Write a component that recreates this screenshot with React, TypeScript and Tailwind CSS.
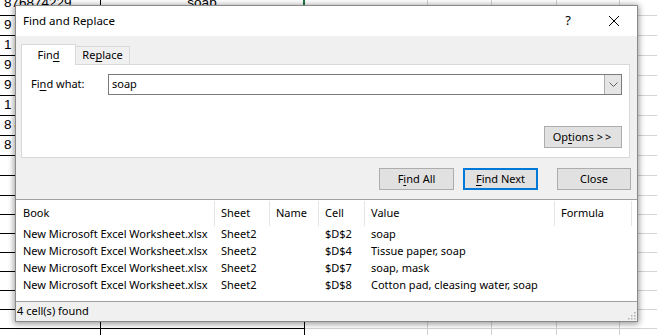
import React from 'react';

// Excel grid behind the dialog
const colWidths = ['w-[101px]', 'w-[204px]', 'w-[123px]', 'w-[64px]', 'w-[65px]', 'w-[63px]', 'w-[60px]'];
const leftNumbers = ['876874229', '934521876', '187654320', '912345678', '965432187', '123987456', '845612390', '876543210'];

const rowHeights = [
  'h-[16px]',
  ...Array(9).fill('h-[20px]'),
  ...Array(8).fill('h-[19px]'),
];

function Sheet() {
  return (
    <div className="flex flex-col font-['Liberation_Sans',sans-serif] text-[13.5px] text-black">
      {rowHeights.map((h, r) => (
        <div key={r} className={`flex ${h}`}>
          {colWidths.map((w, c) => {
            const dark = c < 2;
            return (
              <div
                key={c}
                className={`${w} shrink-0 overflow-hidden whitespace-nowrap border-b ${
                  dark ? 'border-r border-black' : 'border-r border-[#d4d4d4]'
                } ${r === 0 && c === 1 ? 'border-r-2 border-r-[#217346]' : ''} flex items-end`}
              >
                {c === 0 && leftNumbers[r] && (
                  <span className={`pl-[4px] leading-none ${r === 0 ? 'mb-[6px]' : 'mb-[4px] tracking-[3px]'}`}>{leftNumbers[r]}</span>
                )}
                {c === 1 && r === 0 && <span className="w-full text-center leading-none mb-[6px]">soap</span>}
              </div>
            );
          })}
        </div>
      ))}
    </div>
  );
}

function Key({ children }: { children: React.ReactNode }) {
  return <span className="underline underline-offset-[2px] decoration-[1px]">{children}</span>;
}

function Button({ children, primary = false, className = '' }: { children: React.ReactNode; primary?: boolean; className?: string }) {
  return (
    <button
      className={`h-[22px] bg-[#e1e1e1] text-black flex items-center justify-center whitespace-nowrap ${
        primary ? 'border-2 border-[#0078d7]' : 'border border-[#adadad]'
      } ${className}`}
    >
      {children}
    </button>
  );
}

const results = [
  { cell: '$D$2', value: 'soap' },
  { cell: '$D$4', value: 'Tissue paper, soap' },
  { cell: '$D$7', value: 'soap, mask' },
  { cell: '$D$8', value: 'Cotton pad, cleasing water, soap' },
];

function ResultRow({ book, sheet, name, cell, value, formula, header = false }: {
  book: string; sheet: string; name: string; cell: string; value: string; formula: string; header?: boolean;
}) {
  const sep = header ? 'border-r border-[#e5e5e5]' : 'border-r border-transparent';
  return (
    <div className={`flex whitespace-nowrap ${header ? 'h-[26px] pt-[1px]' : 'h-[17px]'} items-center`}>
      <div className={`w-[199px] h-full flex items-center pl-[7px] ${sep}`}>{book}</div>
      <div className={`w-[55px] h-full flex items-center pl-[6px] ${sep}`}>{sheet}</div>
      <div className={`w-[49px] h-full flex items-center pl-[6px] ${sep}`}>{name}</div>
      <div className={`w-[46px] h-full flex items-center pl-[6px] ${sep}`}>{cell}</div>
      <div className={`w-[190px] h-full flex items-center pl-[6px] ${sep}`}>{value}</div>
      <div className={`w-[77px] h-full flex items-center pl-[6px] ${sep}`}>{formula}</div>
    </div>
  );
}

function Dialog() {
  return (
    <div className="absolute left-[15px] top-[5px] w-[623px] h-[317px] bg-[#f0f0f0] border border-[#8a8a8a] shadow-[0_1px_6px_1px_rgba(0,0,0,0.4)] flex flex-col font-['Noto_Sans',sans-serif] text-[11px] text-black">
      {/* Title bar */}
      <div className="h-[30px] bg-white flex items-center shrink-0">
        <span className="pl-[7px] flex-1 text-[11.5px]">Find and Replace</span>
        <div className="w-[46px] h-full flex items-center justify-center text-[13px]">?</div>
        <div className="w-[46px] h-full flex items-center justify-center">
          <svg width="12" height="12" viewBox="0 0 12 12">
            <path d="M1 1 L11 11 M11 1 L1 11" stroke="#000" strokeWidth="1" fill="none" />
          </svg>
        </div>
      </div>

      {/* Body */}
      <div className="h-[163px] shrink-0 flex flex-col pt-[7px] pl-[5px] pr-[6px]">
        <div className="flex items-end h-[21px]">
          <div className="w-[55px] h-[21px] bg-white border border-b-0 border-[#d9d9d9] flex items-center justify-center relative top-[1px]">
            Fin<Key>d</Key>
          </div>
          <div className="w-[54px] h-[18px] bg-[#f0f0f0] border border-l-0 border-b-0 border-[#d9d9d9] flex items-center justify-center">
            Re<Key>p</Key>lace
          </div>
        </div>
        <div className="h-[94px] mr-[1px] bg-white border border-[#d9d9d9] flex flex-col pt-[9px] pl-[9px] pr-[7px]">
          <div className="flex items-center h-[21px]">
            <span className="w-[77px] whitespace-nowrap">Fi<Key>n</Key>d what:</span>
            <div className="flex-1 h-[21px] border border-[#7a7a7a] flex items-center">
              <span className="pl-[3px] flex-1">soap</span>
              <div className="w-[17px] h-[19px] bg-[#e5e5e5] border-l border-[#adadad] flex items-center justify-center">
                <svg width="9" height="6" viewBox="0 0 9 6">
                  <path d="M0.5 0.5 L4.5 4.5 L8.5 0.5" stroke="#606060" strokeWidth="1" fill="none" />
                </svg>
              </div>
            </div>
          </div>
          <div className="flex-1" />
          <div className="flex justify-end pb-[9px]">
            <Button className="w-[78px] h-[21px]">
              Op<Key>t</Key>ions <span className="tracking-[2px] ml-[3px]">&gt;&gt;</span>
            </Button>
          </div>
        </div>
        <div className="flex justify-end mt-[10px]">
          <Button className="w-[75px]">
            F<Key>i</Key>nd All
          </Button>
          <Button primary className="w-[75px] ml-[9px]">
            <Key>F</Key>ind Next
          </Button>
          <Button className="w-[74px] ml-[19px]">Close</Button>
        </div>
      </div>

      {/* Results list */}
      <div className="h-[103px] shrink-0 bg-white border-y border-[#a0a0a0] flex flex-col">
        <ResultRow header book="Book" sheet="Sheet" name="Name" cell="Cell" value="Value" formula="Formula" />
        {results.map((r) => (
          <ResultRow
            key={r.cell}
            book="New Microsoft Excel Worksheet.xlsx"
            sheet="Sheet2"
            name=""
            cell={r.cell}
            value={r.value}
            formula=""
          />
        ))}
      </div>

      {/* Status bar */}
      <div className="flex-1 flex items-center relative">
        <span className="pl-[1px]">4 cell(s) found</span>
        <svg className="absolute right-[1px] bottom-[1px]" width="10" height="10" viewBox="0 0 10 10">
          {[
            [8, 2], [8, 5], [5, 5], [8, 8], [5, 8], [2, 8],
          ].map(([x, y], i) => (
            <rect key={i} x={x} y={y} width="1.5" height="1.5" fill="#b0b0b0" />
          ))}
        </svg>
      </div>
    </div>
  );
}

export default function App() {
  return (
    <div className="relative w-[657px] h-[335px] overflow-hidden bg-white">
      <Sheet />
      <Dialog />
    </div>
  );
}
